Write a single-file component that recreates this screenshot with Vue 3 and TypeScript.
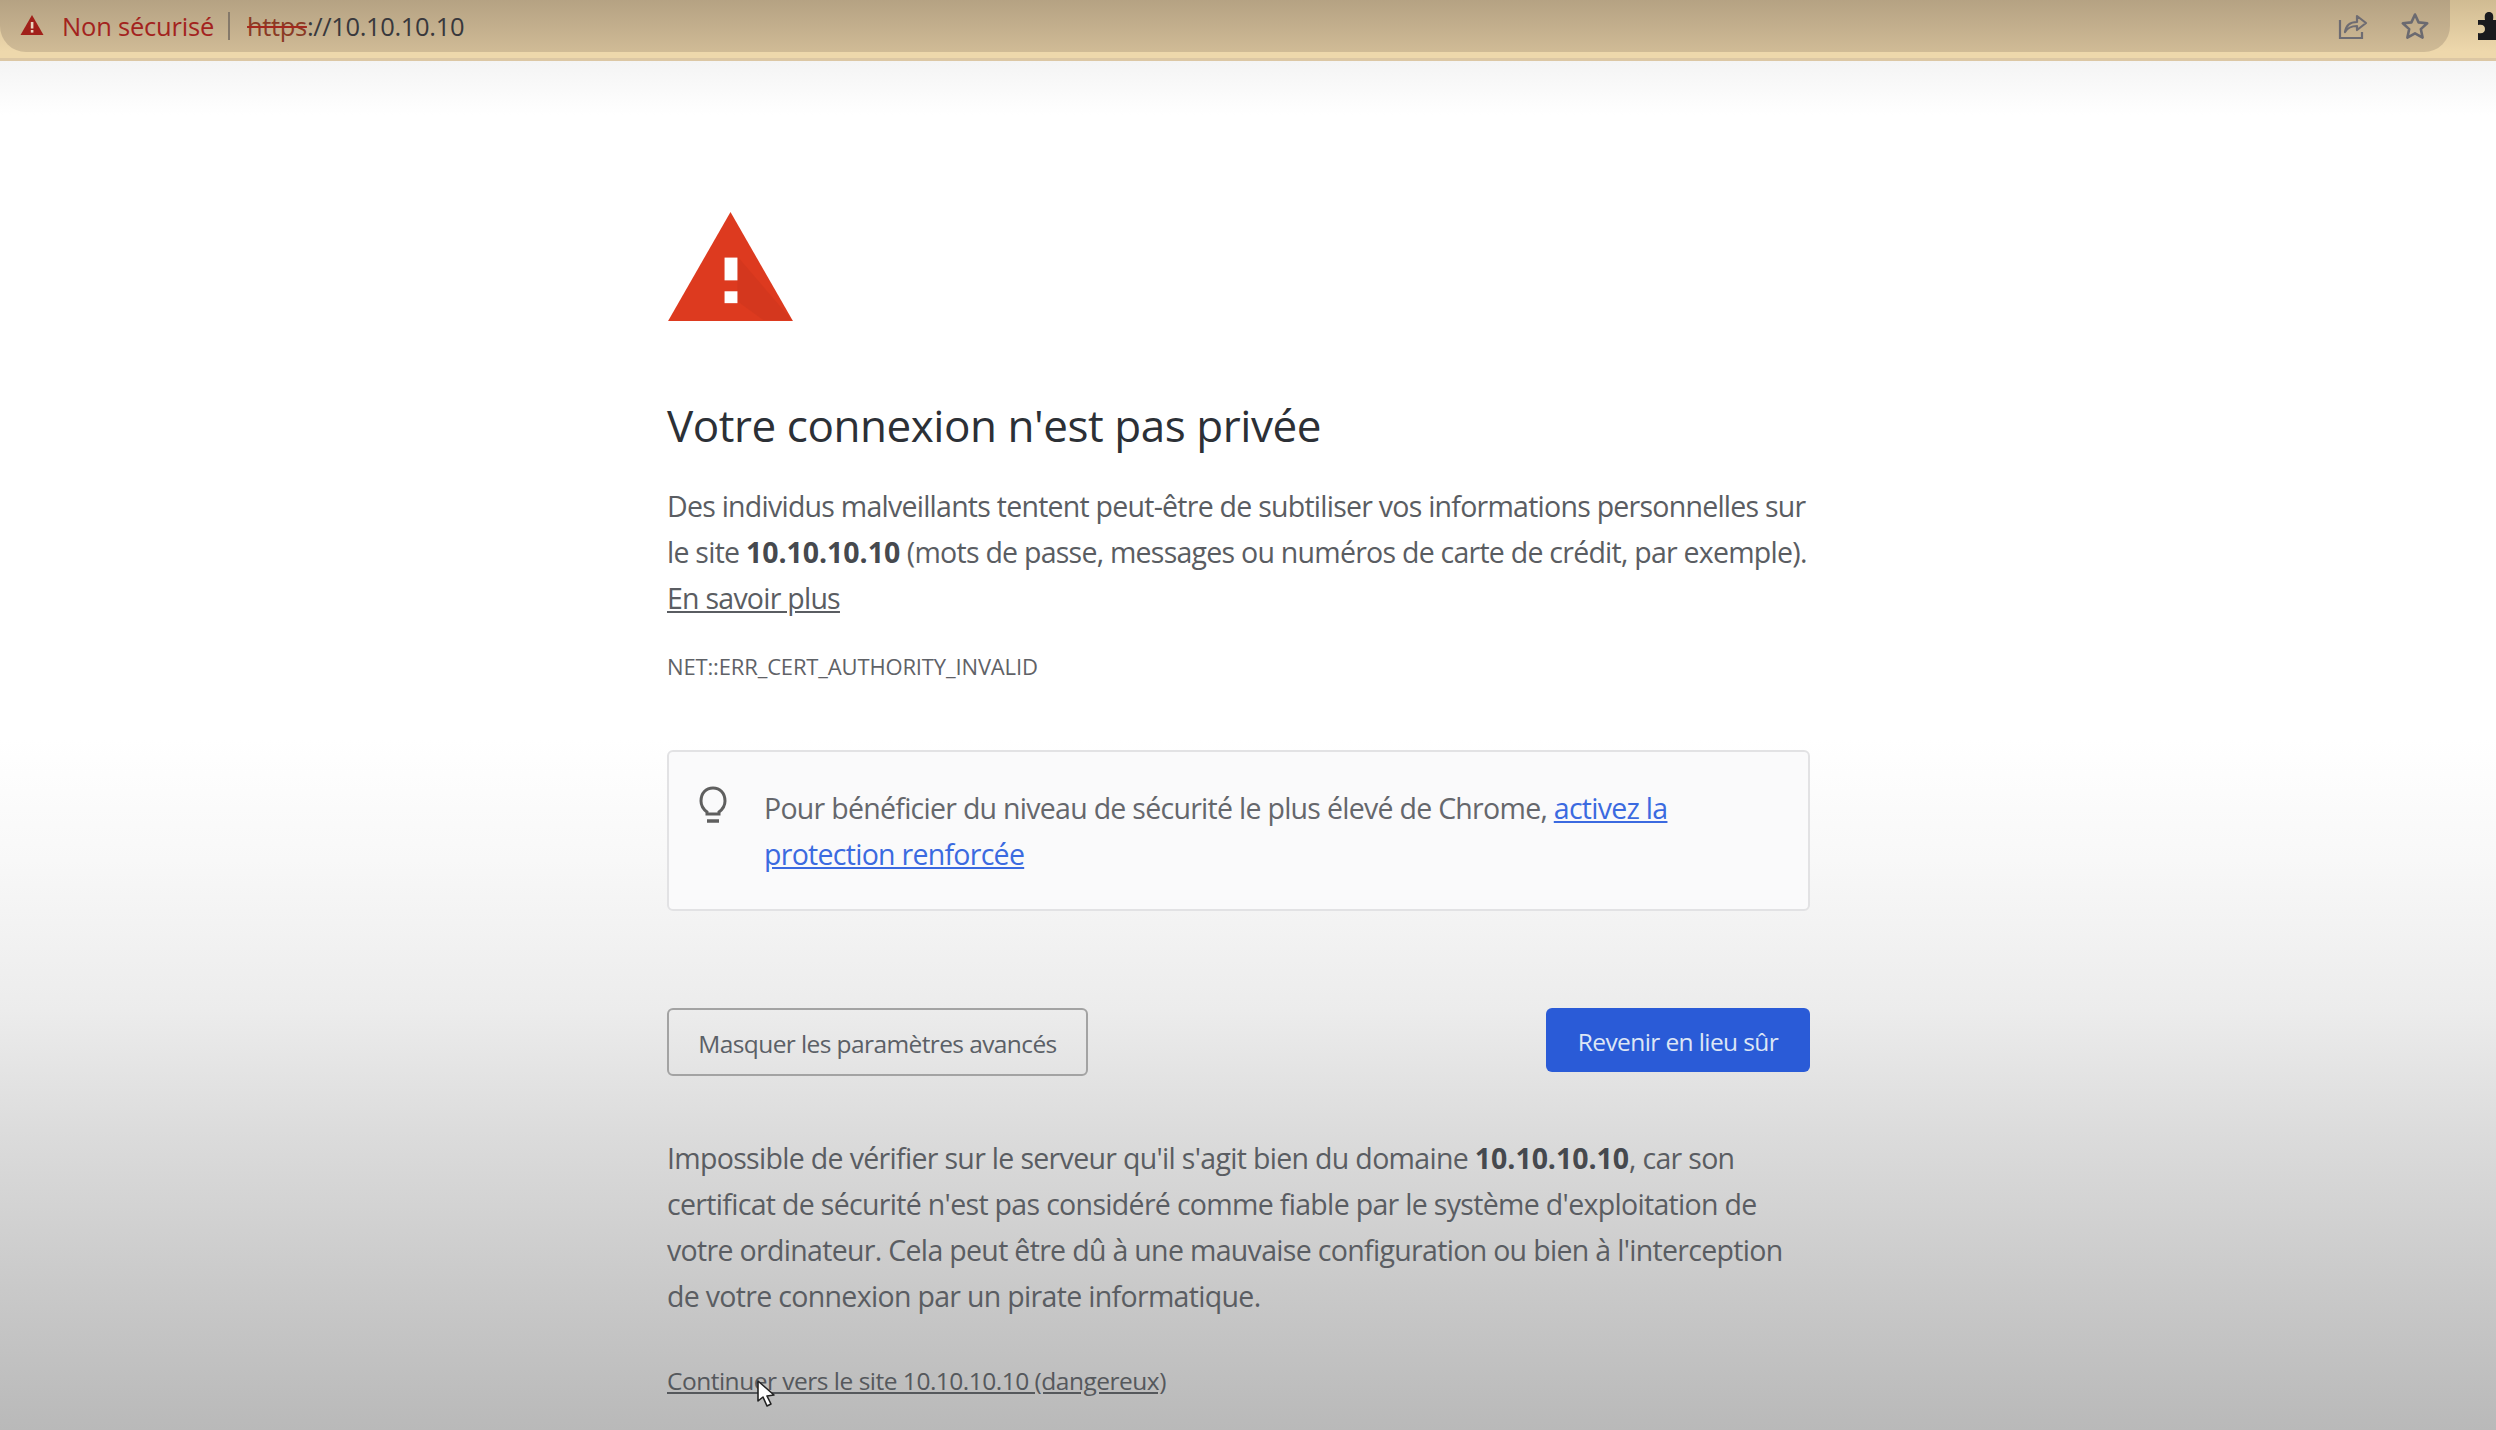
<script setup lang="ts">
const host = '10.10.10.10'
</script>

<template>
  <div class="page">
    <header class="toolbar">
      <div class="omnibox">
        <svg class="warn" viewBox="0 0 24 22" width="24" height="22">
          <path d="M12 1 L23.5 21 H0.5 Z" fill="#a1201a" />
          <rect x="10.8" y="8" width="2.6" height="6.5" fill="#e9d5c0" />
          <rect x="10.8" y="16" width="2.6" height="2.6" fill="#e9d5c0" />
        </svg>
        <span class="not-secure">Non sécurisé</span>
        <span class="divider"></span>
        <span class="url"><s class="scheme">https</s><span class="scheme-sep">:</span>//{{ host }}</span>
        <span class="omni-spacer"></span>
        <svg class="share" viewBox="0 0 30 28" width="30" height="28" fill="none" stroke="#6e6c72" stroke-width="2.2">
          <path d="M2 8 V26 H24 V20" />
          <path d="M7 20 C8 13 12 10 19 10 V4 L28 11 L19 18 V14 C14 14 10 15 7 20 Z" stroke-linejoin="round" />
        </svg>
        <svg class="star" viewBox="0 0 30 28" width="30" height="28" fill="none" stroke="#6b6a70" stroke-width="2.6">
          <path d="M15 2.5 L18.6 10.4 L27.2 11.3 L20.8 17.1 L22.6 25.6 L15 21.3 L7.4 25.6 L9.2 17.1 L2.8 11.3 L11.4 10.4 Z" stroke-linejoin="round" />
        </svg>
      </div>
      <svg class="puzzle" viewBox="0 0 26 28" width="26" height="28">
        <path d="M0 8 H7 C6 2 8 0 11 0 C14 0 16 2 15 8 H24 V28 H0 V21 C5 22 7 20 7 17 C7 14 5 12 0 13 Z" fill="#1a1a1e" />
      </svg>
    </header>

    <main class="content">
      <svg class="alert" viewBox="0 0 126 110" width="125" height="109">
        <path d="M63 0 L126 110 H0 Z" fill="#dd3a1f" />
        <path d="M70 45 L125 109 H96 L70 90 Z" fill="#c9361d" opacity="0.45" />
        <rect x="57" y="46" width="13" height="23" fill="#fff" />
        <rect x="57" y="80" width="13" height="12" fill="#fff" />
      </svg>

      <h1 class="title">Votre connexion n'est pas privée</h1>

      <p class="para intro">
        Des individus malveillants tentent peut-être de subtiliser vos informations personnelles sur
        le site <strong>{{ host }}</strong> (mots de passe, messages ou numéros de carte de crédit, par exemple).
        <a class="plain-link">En savoir plus</a>
      </p>

      <div class="code">NET::ERR_CERT_AUTHORITY_INVALID</div>

      <div class="tip">
        <svg class="bulb" viewBox="0 0 28 38" width="28" height="38" fill="none" stroke="#5f5f5f" stroke-width="3">
          <path d="M8 26 C4 23 2 19 2 15 C2 7 7 2 14 2 C21 2 26 7 26 15 C26 19 24 23 20 26 V28 H8 Z" />
          <path d="M8 35 H20" stroke-width="3.5" />
        </svg>
        <p class="tip-text">
          Pour bénéficier du niveau de sécurité le plus élevé de Chrome,
          <a class="blue-link">activez la protection renforcée</a>
        </p>
      </div>

      <div class="actions">
        <button class="btn-secondary">Masquer les paramètres avancés</button>
        <button class="btn-primary">Revenir en lieu sûr</button>
      </div>

      <p class="para details">
        Impossible de vérifier sur le serveur qu'il s'agit bien du domaine <strong>{{ host }}</strong>, car son
        certificat de sécurité n'est pas considéré comme fiable par le système d'exploitation de
        votre ordinateur. Cela peut être dû à une mauvaise configuration ou bien à l'interception
        de votre connexion par un pirate informatique.
      </p>

      <a class="proceed">Continuer vers le site {{ host }} (dangereux)</a>
    </main>

    <svg class="cursor" viewBox="0 0 18 28" width="18" height="28">
      <path d="M1 1 V21 L6 17 L10 26 L14 24 L10 16 L17 15 Z" fill="#fff" stroke="#222" stroke-width="1.6" stroke-linejoin="round" />
    </svg>
  </div>
</template>

<style>
html, body { margin: 0; background: #fff; }
</style>

<style scoped>
.page {
  position: relative;
  height: 1430px;
  overflow: hidden;
  font-family: "Open Sans", "Noto Sans", sans-serif;
  background: linear-gradient(180deg, #f4f4f4 60px, #fff 115px, #fff 740px, #f8f8f8 860px, #ececec 1010px, #dcdcdc 1130px, #c9c9c9 1290px, #b9b9b9 1430px);
}

.toolbar {
  height: 58px;
  display: flex;
  align-items: flex-start;
  background: linear-gradient(180deg, #d0bb92, #eed8ac 52px, #eed8ac 58px);
  border-bottom: 3px solid #dcc7a4;
  box-sizing: content-box;
}

.omnibox {
  width: 2450px;
  height: 52px;
  flex: none;
  display: flex;
  align-items: center;
  padding-left: 20px;
  padding-right: 20px;
  box-sizing: border-box;
  border-radius: 0 0 26px 26px;
  background: linear-gradient(180deg, #b5a283, #d0bb96);
}

.warn { margin-top: -2px; }
.not-secure { margin-left: 18px; font-size: 25.5px; letter-spacing: -0.2px; color: #a3231e; }
.divider { width: 2px; height: 28px; margin: 0 17px 0 14px; background: #85796a; }
.url { font-size: 25.5px; letter-spacing: -0.35px; color: #38383c; }
.scheme { color: #8a3a24; text-decoration-color: #a5281e; }
.scheme-sep { color: #38383c; }
.omni-spacer { flex: 1; }
.share { margin-right: 32px; }
.star { margin-right: 0; }

.puzzle { margin: 12px 0 0 28px; flex: none; }

.content {
  width: 1143px;
  margin-left: 667px;
  display: flex;
  flex-direction: column;
  padding-top: 151px;
}

.alert { display: block; margin-left: 1px; }

.title {
  margin: 78px 0 0;
  font-size: 44px;
  line-height: 52px;
  font-weight: 400;
  letter-spacing: -0.45px;
  color: #2c3036;
}

.para {
  margin: 0;
  font-size: 28.5px;
  line-height: 45.8px;
  letter-spacing: -0.75px;
  color: #5a5d62;
}

.para strong { font-weight: 700; letter-spacing: -0.05px; color: #46494e; }

.intro { margin-top: 33px; width: 1160px; }

.plain-link { text-decoration: underline; color: #5a5d62; display: block; }

.code {
  margin-top: 30px;
  font-size: 22px;
  line-height: 30px;
  letter-spacing: -0.15px;
  color: #5f6267;
}

.tip {
  margin-top: 69px;
  height: 161px;
  box-sizing: border-box;
  display: flex;
  gap: 37px;
  padding: 35px 0 0 30px;
  border: 2px solid #e2e2e4;
  border-radius: 6px;
  background: #fafafb;
}

.bulb { flex: none; margin-top: -1px; }

.tip-text {
  margin: -1px 0 0;
  width: 1000px;
  font-size: 28.5px;
  line-height: 45.8px;
  letter-spacing: -0.72px;
  color: #65676c;
}

.blue-link { color: #3b6ae0; text-decoration: underline; }

.actions {
  margin-top: 97px;
  display: flex;
  justify-content: space-between;
  align-items: flex-start;
}

.btn-secondary {
  width: 421px;
  height: 68px;
  padding: 2px 0 0;
  border: 2px solid #a3a3a3;
  border-radius: 6px;
  background: transparent;
  font: 400 24.5px "Open Sans", sans-serif;
  letter-spacing: -0.6px;
  color: #5b6066;
}

.btn-primary {
  width: 264px;
  height: 64px;
  padding: 2px 0 0;
  border: 0;
  border-radius: 6px;
  background: #2a5bd7;
  font: 400 24.5px "Open Sans", sans-serif;
  letter-spacing: -0.6px;
  color: #dde6f5;
}

.details { margin-top: 60px; letter-spacing: -0.68px; }

.proceed {
  margin-top: 44px;
  font-size: 24.5px;
  line-height: 34px;
  letter-spacing: -0.5px;
  color: #55585c;
  text-decoration: underline;
}

.cursor { position: absolute; left: 757px; top: 1380px; }
</style>
